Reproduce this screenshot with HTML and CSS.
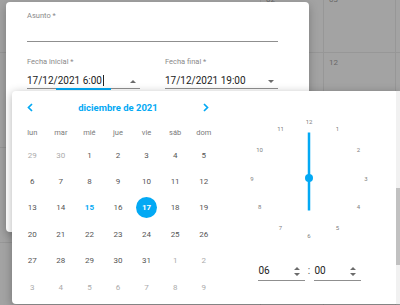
FILE: index.html
```html
<!DOCTYPE html>
<html lang="es">

<head>
    <meta charset="UTF-8">
    <title>Nuevo evento</title>
    <link rel="stylesheet" href="styles.css">
</head>

<body>
    <div id="screen">
        <div class="month">
            <div class="cell"></div>
            <div class="cell">02</div>
            <div class="cell">03</div>
            <div class="cell"></div>
            <div class="cell"></div>
            <div class="cell"></div>
            <div class="cell">12</div>
            <div class="cell"></div>
            <div class="cell"></div>
            <div class="cell"></div>
            <div class="cell"></div>
            <div class="cell"></div>
            <div class="cell"></div>
            <div class="cell"></div>
            <div class="cell"></div>
            <div class="cell"></div>
        </div>

        <div class="dialog">
            <div class="field">
                <label class="lbl">Asunto *</label>
                <div class="value empty"></div>
            </div>
            <div class="dates">
                <div class="field">
                    <label class="lbl">Fecha inicial *</label>
                    <div class="value">
                        <span>17/12/2021 6:00<i class="caret"></i></span>
                        <span class="tri up"></span>
                    </div>
                    <div class="focusbar"></div>
                </div>
                <div class="field">
                    <label class="lbl">Fecha final *</label>
                    <div class="value">
                        <span>17/12/2021 19:00</span>
                        <span class="tri down"></span>
                    </div>
                </div>
            </div>
        </div>

        <div class="picker">
            <div class="cal">
                <div class="cal-head">
                    <svg class="chev" width="6" height="9" viewBox="0 0 6 9"><path d="M5 1 L1.5 4.5 L5 8" fill="none" stroke="#03a9f4" stroke-width="1.7"/></svg>
                    <span>diciembre de 2021</span>
                    <svg class="chev" width="6" height="9" viewBox="0 0 6 9"><path d="M1 1 L4.5 4.5 L1 8" fill="none" stroke="#03a9f4" stroke-width="1.7"/></svg>
                </div>
                <div class="weekdays">
                    <span>lun</span><span>mar</span><span>mié</span><span>jue</span><span>vie</span><span>sáb</span><span>dom</span>
                </div>
                <div class="days">
                    <span class="day other">29</span><span class="day other">30</span><span class="day">1</span><span class="day">2</span><span class="day">3</span><span class="day">4</span><span class="day">5</span>
                    <span class="day">6</span><span class="day">7</span><span class="day">8</span><span class="day">9</span><span class="day">10</span><span class="day">11</span><span class="day">12</span>
                    <span class="day">13</span><span class="day">14</span><span class="day today">15</span><span class="day">16</span><span class="day sel"><b>17</b></span><span class="day">18</span><span class="day">19</span>
                    <span class="day">20</span><span class="day">21</span><span class="day">22</span><span class="day">23</span><span class="day">24</span><span class="day">25</span><span class="day">26</span>
                    <span class="day">27</span><span class="day">28</span><span class="day">29</span><span class="day">30</span><span class="day">31</span><span class="day other">1</span><span class="day other">2</span>
                    <span class="day other">3</span><span class="day other">4</span><span class="day other">5</span><span class="day other">6</span><span class="day other">7</span><span class="day other">8</span><span class="day other">9</span>
                </div>
            </div>

            <div class="clock-side">
                <svg class="clock" width="130" height="130" viewBox="0 0 130 130">
                    <g class="nums">
                        <text x="65" y="8">12</text>
                        <text x="93.5" y="15.6">1</text>
                        <text x="114.4" y="36.5">2</text>
                        <text x="122" y="65">3</text>
                        <text x="114.4" y="93.5">4</text>
                        <text x="93.5" y="114.4">5</text>
                        <text x="65" y="122">6</text>
                        <text x="36.5" y="114.4">7</text>
                        <text x="15.6" y="93.5">8</text>
                        <text x="8" y="65">9</text>
                        <text x="15.6" y="36.5">10</text>
                        <text x="36.5" y="15.6">11</text>
                    </g>
                    <line x1="65" y1="65" x2="65" y2="19.5" stroke="#03a9f4" stroke-width="2.5"/>
                    <line x1="65" y1="65" x2="65" y2="97.5" stroke="#03a9f4" stroke-width="2.5"/>
                    <circle cx="65" cy="65" r="4" fill="#03a9f4"/>
                </svg>
                <div class="time">
                    <div class="tfield">
                        <span>06</span>
                        <svg width="6" height="9" viewBox="0 0 6 9"><path d="M0 3 L3 0 L6 3 Z M0 6 L6 6 L3 9 Z" fill="#6b6b6b"/></svg>
                    </div>
                    <span class="colon">:</span>
                    <div class="tfield">
                        <span>00</span>
                        <svg width="6" height="9" viewBox="0 0 6 9"><path d="M0 3 L3 0 L6 3 Z M0 6 L6 6 L3 9 Z" fill="#6b6b6b"/></svg>
                    </div>
                </div>
            </div>

            <div class="scroll"><div class="thumb"></div></div>
        </div>
    </div>
</body>

</html>
```

FILE: styles.css
```css
* {
    box-sizing: border-box;
    margin: 0;
    padding: 0;
}

body {
    font-family: Roboto, "Liberation Sans", sans-serif;
    background: #a3a3a3;
}

#screen {
    position: relative;
    width: 400px;
    height: 305px;
    overflow: hidden;
}

/* dimmed month view behind the dialog */
.month {
    margin-top: -10px;
    display: grid;
    grid-template-columns: 261px 63px 72px 40px;
    grid-template-rows: 63px 95px 95px 95px;
}

.month .cell {
    border-right: 1px solid #979797;
    border-bottom: 1px solid #979797;
    padding: 5px 0 0 5px;
    font-size: 8px;
    line-height: 10px;
    color: #696969;
}

/* dialog */
.dialog {
    position: absolute;
    left: 6px;
    top: 2px;
    width: 303px;
    height: 230px;
    background: #fff;
    border-radius: 4px;
    box-shadow: 0 3px 10px rgba(0, 0, 0, 0.25);
    padding: 8px 31px 0 21px;
}

.lbl {
    display: block;
    font-size: 7.5px;
    line-height: 11px;
    color: #8a8a8a;
}

.value {
    display: flex;
    justify-content: space-between;
    align-items: center;
    border-bottom: 1px solid #8f8f8f;
    padding-top: 7px;
    font-size: 10px;
    line-height: 14px;
    color: #222;
}

.value.empty {
    height: 21px;
    padding: 0;
}

.dates {
    display: grid;
    grid-template-columns: 113px 113px;
    column-gap: 25px;
    margin-top: 14px;
}

.caret {
    display: inline-block;
    width: 1px;
    height: 11px;
    background: #222;
    vertical-align: -2px;
    margin-left: 1px;
}

.tri {
    width: 0;
    height: 0;
    border-left: 3px solid transparent;
    border-right: 3px solid transparent;
    margin-right: 4px;
}

.tri.up {
    border-bottom: 3px solid #6b6b6b;
}

.tri.down {
    border-top: 3px solid #6b6b6b;
}

.focusbar {
    width: 55px;
    height: 2px;
    margin: -1px auto 0;
    background: #03a9f4;
}

/* date + time picker */
.picker {
    position: absolute;
    left: 12px;
    top: 91px;
    width: 388px;
    height: 213px;
    background: #fff;
    border-radius: 4px 0 0 4px;
    box-shadow: 0 2px 10px rgba(0, 0, 0, 0.3);
    display: flex;
    padding-left: 6px;
}

.cal {
    width: 200px;
}

.cal-head {
    height: 32px;
    display: flex;
    align-items: center;
    justify-content: space-between;
    padding: 0 9px;
    color: #03a9f4;
    font-size: 9.5px;
    font-weight: bold;
}

.chev {
    display: block;
}

.weekdays {
    display: grid;
    grid-template-columns: repeat(7, 1fr);
    height: 19px;
    align-items: center;
    text-align: center;
    font-size: 7.5px;
    color: #7a7a7a;
}

.days {
    display: grid;
    grid-template-columns: repeat(7, 1fr);
    grid-auto-rows: 26.4px;
    font-size: 8px;
    color: #555;
}

.day {
    display: flex;
    align-items: center;
    justify-content: center;
}

.day.other {
    color: #ababab;
}

.day.today {
    color: #03a9f4;
    font-weight: bold;
}

.day.sel b {
    width: 21px;
    height: 21px;
    border-radius: 50%;
    background: #03a9f4;
    color: #fff;
    display: flex;
    align-items: center;
    justify-content: center;
}

.clock-side {
    width: 182px;
    display: flex;
    flex-direction: column;
    align-items: center;
    padding-top: 21.5px;
}

.clock {
    display: block;
}

.clock .nums text {
    font-family: Roboto, "Liberation Sans", sans-serif;
    font-size: 6px;
    fill: #808080;
    text-anchor: middle;
    dominant-baseline: central;
}

.time {
    display: flex;
    align-items: flex-end;
    margin-top: 21.5px;
}

.tfield {
    width: 47px;
    display: flex;
    justify-content: space-between;
    align-items: center;
    border-bottom: 1px solid #8f8f8f;
    padding: 0 5px 2px 1px;
    font-size: 10px;
    line-height: 14px;
    color: #222;
}

.colon {
    width: 9px;
    text-align: center;
    font-size: 10px;
    line-height: 14px;
    color: #555;
    padding-bottom: 3px;
}

.scroll {
    position: absolute;
    right: 0;
    top: 0;
    width: 4px;
    height: 100%;
    background: #f1f1f1;
}

.thumb {
    margin-top: 97px;
    height: 77px;
    background: #c1c1c1;
}
```
